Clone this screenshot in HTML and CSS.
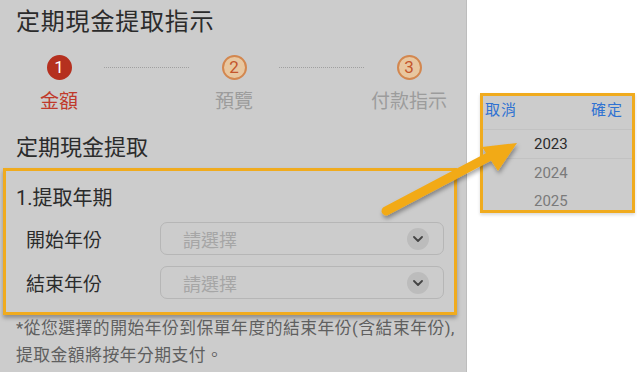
FILE: index.html
```html
<!DOCTYPE html>
<html lang="zh-Hant">
<head>
    <meta charset="UTF-8">
    <meta name="viewport" content="width=device-width, initial-scale=1.0">
    <title>定期現金提取指示</title>
    <link rel="stylesheet" href="styles.css">
</head>
<body>
    <div class="stranka">
        <div class="panel">
            <h1 class="titulek">定期現金提取指示</h1>
            <div class="kroky">
                <div class="krok aktivni">
                    <span class="kolecko">1</span>
                    <span class="popis">金額</span>
                </div>
                <div class="cara"></div>
                <div class="krok">
                    <span class="kolecko">2</span>
                    <span class="popis">預覽</span>
                </div>
                <div class="cara"></div>
                <div class="krok">
                    <span class="kolecko">3</span>
                    <span class="popis">付款指示</span>
                </div>
            </div>
            <h2 class="podtitulek">定期現金提取</h2>
            <div class="ramecek">
                <h3 class="sekce">1.提取年期</h3>
                <div class="radek">
                    <span class="stitek">開始年份</span>
                    <div class="vyber">
                        <span class="placeholder">請選擇</span>
                        <span class="sipka"><svg width="10" height="6" viewBox="0 0 10 6"><path d="M1 1 L5 5 L9 1" fill="none" stroke="#444" stroke-width="1.8" stroke-linecap="round" stroke-linejoin="round"/></svg></span>
                    </div>
                </div>
                <div class="radek">
                    <span class="stitek">結束年份</span>
                    <div class="vyber">
                        <span class="placeholder">請選擇</span>
                        <span class="sipka"><svg width="10" height="6" viewBox="0 0 10 6"><path d="M1 1 L5 5 L9 1" fill="none" stroke="#444" stroke-width="1.8" stroke-linecap="round" stroke-linejoin="round"/></svg></span>
                    </div>
                </div>
            </div>
            <p class="poznamka">*從您選擇的開始年份到保單年度的結束年份(含結束年份),<br>提取金額將按年分期支付。</p>
        </div>
        <div class="picker">
            <div class="picker-hlava">
                <span>取消</span>
                <span>確定</span>
            </div>
            <div class="rok vybrany">2023</div>
            <div class="rok">2024</div>
            <div class="rok">2025</div>
        </div>
    </div>
    <svg class="sipka-velka" width="637" height="372" viewBox="0 0 637 372">
        <defs>
            <filter id="stin" x="-20%" y="-20%" width="140%" height="140%">
                <feDropShadow dx="1" dy="3" stdDeviation="2" flood-color="#000" flood-opacity="0.35"/>
            </filter>
        </defs>
        <g filter="url(#stin)">
            <line x1="386" y1="211" x2="494" y2="154" stroke="#f2aa17" stroke-width="9" stroke-linecap="round"/>
            <polygon points="517,143 482,147 498,171" fill="#f2aa17"/>
        </g>
    </svg>
</body>
</html>
```

FILE: styles.css
```css
body {
    margin: 0;
    background-color: #fff;
    font-family: Roboto, "Noto Sans CJK TC", sans-serif;
    color: #2b2b2b;
}
.stranka {
    display: flex;
    align-items: flex-start;
}
.panel {
    width: 466px;
    height: 372px;
    background-color: #cccccc;
    border-right: 1px solid #bdbdbd;
    overflow: hidden;
}
.titulek {
    margin: 0;
    padding: 7px 0 0 16px;
    font-size: 24px;
    line-height: 30px;
    font-weight: 400;
    letter-spacing: 0.8px;
}
.kroky {
    display: flex;
    margin-top: 18px;
    padding-left: 14px;
}
.krok {
    width: 90px;
    display: flex;
    flex-direction: column;
    align-items: center;
}
.kolecko {
    box-sizing: border-box;
    width: 25px;
    height: 25px;
    border-radius: 50%;
    border: 2px solid #d3874f;
    background-color: #e8c7a0;
    color: #c4562c;
    font-size: 17px;
    line-height: 21px;
    text-align: center;
}
.aktivni .kolecko {
    border-color: #b5301f;
    background-color: #b5301f;
    color: #fff;
}
.popis {
    margin-top: 9px;
    font-size: 19px;
    line-height: 26px;
    color: #9c9c9c;
}
.aktivni .popis {
    color: #c0392b;
}
.cara {
    width: 85px;
    margin-top: 12px;
    height: 0;
    border-top: 1px dotted #a0a0a0;
}
.podtitulek {
    margin: 19px 0 0 16px;
    font-size: 22px;
    line-height: 28px;
    font-weight: 400;
}
.ramecek {
    margin: 6px 0 0 3px;
    border: 3px solid #f0ab1e;
    padding: 14px 10px 13px 10px;
    box-sizing: border-box;
    width: 454px;
    box-shadow: 0 3px 4px rgba(0, 0, 0, 0.3);
}
.sekce {
    margin: 0;
    font-size: 20px;
    line-height: 26px;
    font-weight: 400;
}
.radek {
    display: flex;
    align-items: center;
    margin-top: 11px;
    padding-left: 10px;
}
.stitek {
    width: 134px;
    font-size: 19px;
}
.vyber {
    flex: 1;
    height: 33px;
    box-sizing: border-box;
    border: 1px solid #b6b6b6;
    border-radius: 7px;
    display: flex;
    align-items: center;
    justify-content: space-between;
    padding: 0 14px 0 22px;
}
.placeholder {
    font-size: 18px;
    color: #a6a6a6;
}
.sipka {
    width: 22px;
    height: 22px;
    border-radius: 50%;
    background-color: #bcbcbc;
    display: flex;
    align-items: center;
    justify-content: center;
}
.poznamka {
    margin: 0;
    padding-left: 16px;
    font-size: 16.8px;
    line-height: 27px;
    letter-spacing: 0.5px;
    color: #5f5f5f;
    white-space: nowrap;
}
.picker {
    margin: 93px 0 0 13px;
    width: 155px;
    height: 120px;
    box-sizing: border-box;
    background-color: #cccccc;
    border: 3px solid #f0ab1e;
    box-shadow: 0 2px 3px rgba(0, 0, 0, 0.15);
}
.picker-hlava {
    display: flex;
    justify-content: space-between;
    padding: 4px 9px 0 2px;
    font-size: 15px;
    line-height: 20px;
    color: #2f72d2;
    letter-spacing: 1px;
}
.rok {
    height: 28px;
    line-height: 28px;
    padding-left: 51px;
    font-size: 15px;
    color: #7a7a7a;
}
.vybrany {
    margin-top: 9px;
    color: #2b2b2b;
    border-top: 1px solid #c2c2c2;
    border-bottom: 1px solid #c2c2c2;
}
.sipka-velka {
    position: absolute;
    left: 0;
    top: 0;
    pointer-events: none;
}
```
